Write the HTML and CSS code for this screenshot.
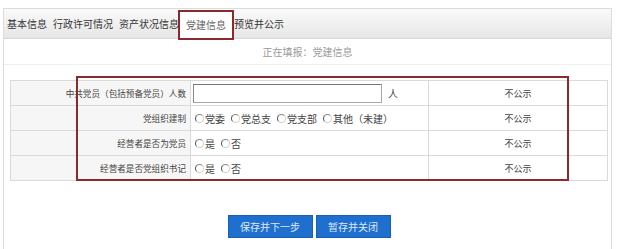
FILE: index.html
```html
<!DOCTYPE html>
<html lang="zh-CN">
<head>
<meta charset="utf-8">
<title>党建信息</title>
<link rel="stylesheet" href="styles.css">
</head>
<body>
<div class="frame">
  <div class="tabs">
    <span class="tab">基本信息</span>
    <span class="tab">行政许可情况</span>
    <span class="tab">资产状况信息</span>
    <span class="tab active">党建信息</span>
    <span class="tab">预览并公示</span>
  </div>
  <div class="status">正在填报：党建信息</div>
  <table class="form">
    <tr>
      <td class="lbl">中共党员（包括预备党员）人数</td>
      <td class="val"><div class="field"><input type="text" class="txt"><span class="unit">人</span></div></td>
      <td class="pub">不公示</td>
    </tr>
    <tr>
      <td class="lbl">党组织建制</td>
      <td class="val">
        <div class="radios">
          <label class="opt"><input type="radio" name="org" class="rd">党委</label>
          <label class="opt"><input type="radio" name="org" class="rd">党总支</label>
          <label class="opt"><input type="radio" name="org" class="rd">党支部</label>
          <label class="opt"><input type="radio" name="org" class="rd">其他（未建）</label>
        </div>
      </td>
      <td class="pub">不公示</td>
    </tr>
    <tr>
      <td class="lbl">经营者是否为党员</td>
      <td class="val">
        <div class="radios">
          <label class="opt"><input type="radio" name="m" class="rd">是</label>
          <label class="opt"><input type="radio" name="m" class="rd">否</label>
        </div>
      </td>
      <td class="pub">不公示</td>
    </tr>
    <tr>
      <td class="lbl">经营者是否党组织书记</td>
      <td class="val">
        <div class="radios">
          <label class="opt"><input type="radio" name="s" class="rd">是</label>
          <label class="opt"><input type="radio" name="s" class="rd">否</label>
        </div>
      </td>
      <td class="pub">不公示</td>
    </tr>
  </table>
  <div class="actions">
    <button class="btn btn-next">保存并下一步</button>
    <button class="btn btn-close">暂存并关闭</button>
  </div>
  <div class="highlight"></div>
</div>
</body>
</html>
```

FILE: styles.css
```css
html, body {
  margin: 0;
  padding: 0;
  background: #fff;
  overflow: hidden;
}
body {
  padding: 8px 0 0 3px;
  font-family: "Noto Sans CJK SC", "Noto Sans", sans-serif;
  font-size: 10px;
  color: #333;
}
.frame {
  position: relative;
  width: 609px;
  height: 241px;
  box-sizing: border-box;
  border: 1px solid #dcdcdc;
  border-bottom: none;
}
.tabs {
  display: flex;
  align-items: flex-start;
  height: 29px;
  background: linear-gradient(#fafafa, #e6e6e6);
  border-bottom: 1px solid #d6d6d6;
}
.tab {
  padding: 0 3px;
  line-height: 29px;
  color: #333;
  white-space: nowrap;
}
.tab.active {
  margin-top: 1px;
  margin-left: -4px;
  margin-right: -3px;
  height: 30px;
  box-sizing: border-box;
  line-height: 26px;
  padding: 0 6px;
  background: #fff;
  color: #666;
  border: 2px solid #8b2a2e;
  position: relative;
  z-index: 1;
}
.status {
  height: 25px;
  line-height: 25px;
  text-align: center;
  color: #9a9a9a;
  border-bottom: 1px solid #efefef;
}
.form {
  margin: 15px 0 0 6px;
  width: 598px;
  border-collapse: collapse;
  table-layout: fixed;
}
.form td {
  border: 1px solid #dadada;
  height: 24px;
  padding: 0;
  white-space: nowrap;
}
.lbl {
  width: 175px;
  padding-right: 4px !important;
  text-align: right;
  background: #f6f6f6;
  font-size: 8.6px;
  color: #444;
}
.val {
  width: 237px;
}
.pub {
  text-align: center;
  font-size: 9px;
  color: #444;
}
.field {
  display: flex;
  align-items: center;
  padding-left: 2px;
}
.txt {
  width: 189px;
  height: 19px;
  box-sizing: border-box;
  margin: 0;
  border: 1px solid #a8a8a8;
  border-top-color: #777;
  border-left-color: #888;
  background: #fff;
}
.unit {
  margin-left: 6px;
  color: #444;
}
.radios {
  display: flex;
  align-items: center;
  gap: 6px;
  padding-left: 4px;
}
.opt {
  display: flex;
  align-items: center;
  color: #444;
}
.rd {
  -webkit-appearance: none;
  appearance: none;
  width: 9px;
  height: 9px;
  margin: 0 1px 0 0;
  border-radius: 50%;
  border: 1px solid #d0d0d0;
  border-left-color: #555;
  border-top-color: #888;
  background: #fff;
}
.actions {
  display: flex;
  justify-content: center;
  gap: 3px;
  margin-top: 34px;
  margin-left: 3px;
}
.btn {
  height: 23px;
  margin: 0;
  padding: 0;
  border: 1px solid #1a5fb4;
  background: #1f6fcf;
  color: #dfe9f7;
  font-family: inherit;
  font-size: 10px;
}
.btn-next { width: 85px; }
.btn-close { width: 75px; }
.highlight {
  position: absolute;
  left: 72px;
  top: 67px;
  width: 493px;
  height: 105px;
  box-sizing: border-box;
  border: 2px solid #8b2a2e;
  pointer-events: none;
}
```
